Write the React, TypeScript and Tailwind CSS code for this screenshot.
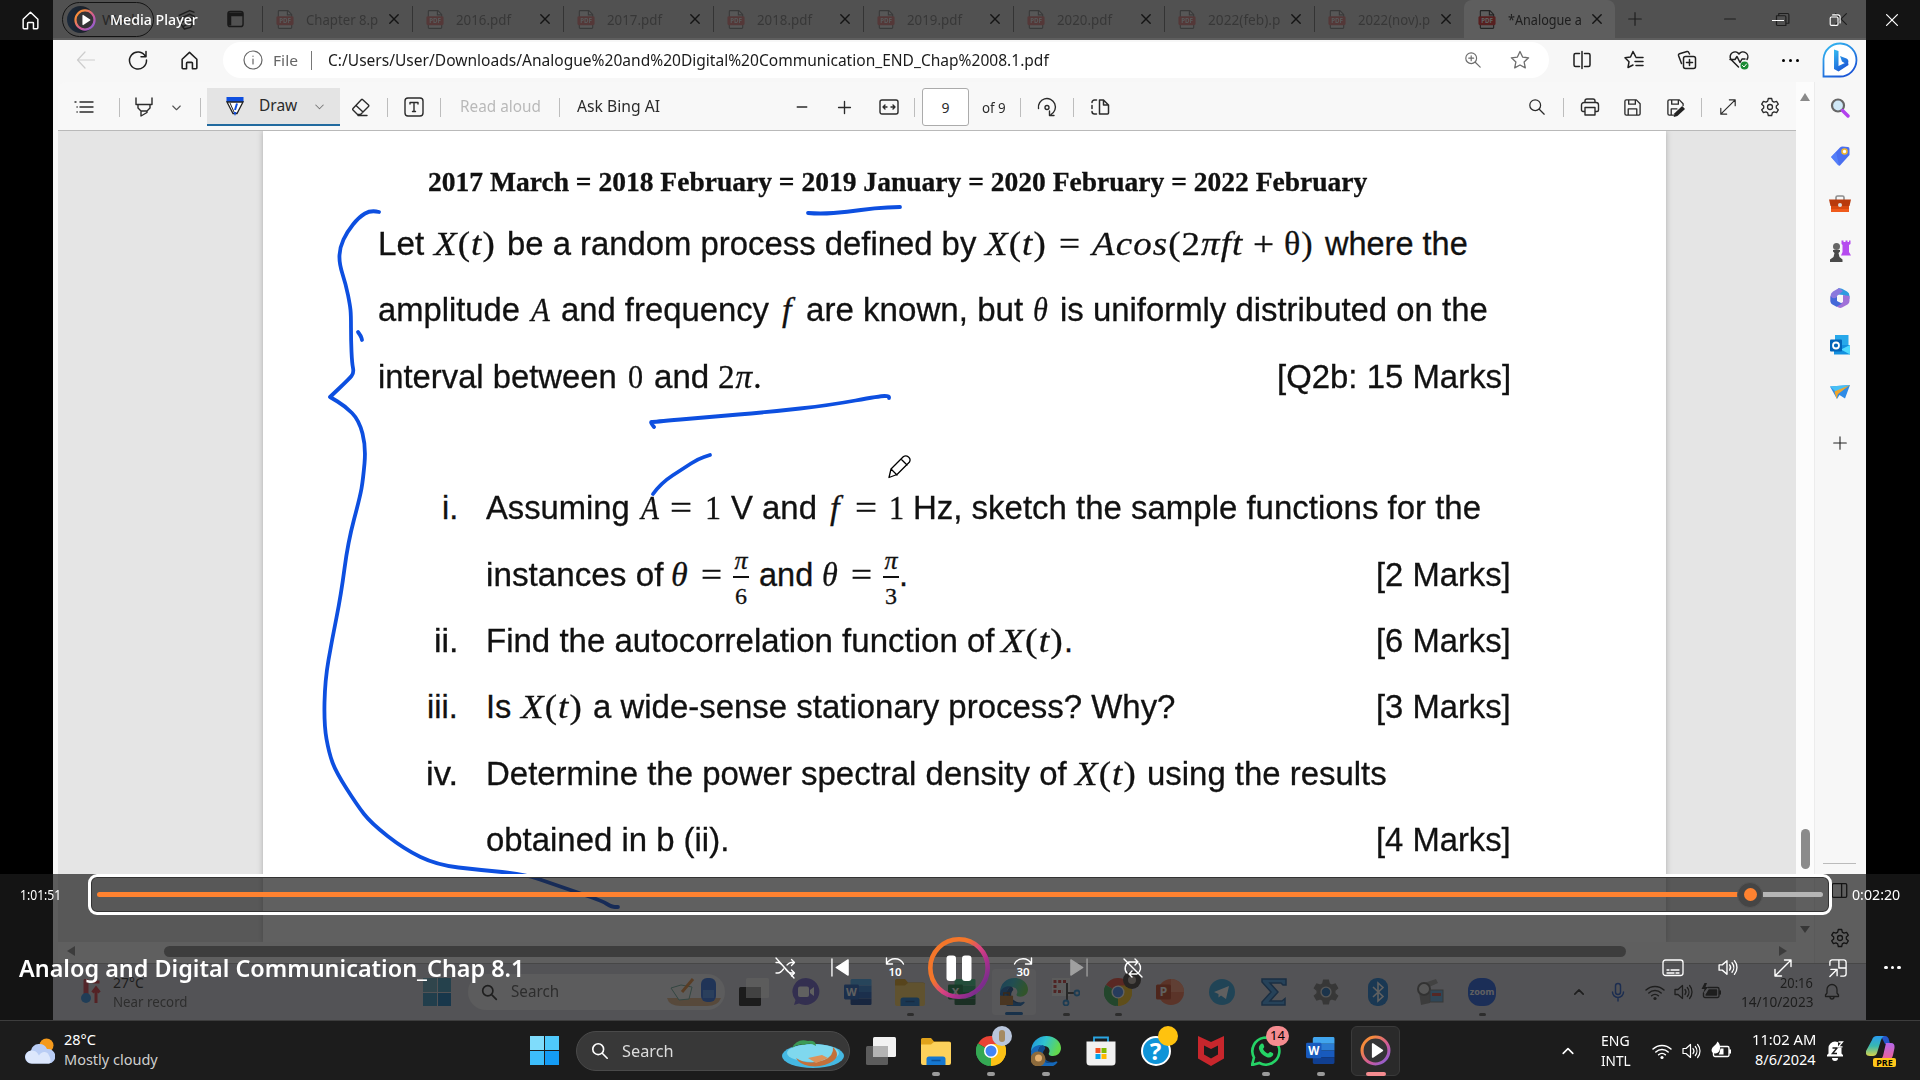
import React, { ReactNode, useLayoutEffect, useRef, useState } from "react";
import clsx from "clsx";

const UI = "font-['Noto_Sans','Open_Sans',sans-serif]";

/* Single-line label squeezed or stretched to a fixed width. */
function Fit({ w, c, children }: { w: number; c?: string; children: ReactNode }) {
  const ref = useRef<HTMLSpanElement>(null);
  const [k, setK] = useState(1);
  useLayoutEffect(() => {
    if (ref.current) setK(w / ref.current.offsetWidth);
  }, [w, children]);
  return (
    <span className={clsx("inline-block shrink-0 whitespace-nowrap", c)} style={{ width: w }}>
      <span ref={ref} className="inline-block origin-left whitespace-pre" style={{ transform: `scaleX(${k})` }}>
        {children}
      </span>
    </span>
  );
}

function Cell({ c, children }: { c: string; children?: ReactNode }) {
  return <div className={clsx("flex shrink-0 items-center justify-center", c)}>{children}</div>;
}

function Sep({ c = "h-[19px] bg-[#bdbdbd]" }: { c?: string }) {
  return <div className={clsx("w-px shrink-0", c)} />;
}

/* Outline icon on a 20-unit grid. */
function Ic({ d, c = "size-5", sw = 1.3, children }: { d?: string; c?: string; sw?: number; children?: ReactNode }) {
  return (
    <svg viewBox="0 0 20 20" className={clsx("shrink-0 overflow-visible", c)} fill="none" stroke="currentColor" strokeWidth={sw} strokeLinecap="round" strokeLinejoin="round">
      {d && <path d={d} />}
      {children}
    </svg>
  );
}

const P = {
  home: "M3 8.8 10 2.2l7 6.6V17a.8.8 0 0 1-.8.8h-3.4V12.600a.8.8 0 0 0-.8-.8H8a.8.8 0 0 0-.8.8v5.200H3.800A.8.8 0 0 1 3 17Z",
  x: "M4 4l12 12M16 4 4 16",
  plus: "M10 3v14M3 10h14",
  minus: "M4 10h12",
  down: "M5 8l5 5 5-5",
  up: "M4 13l6-6 6 6",
  search: "M8 14A6 6 0 1 0 8 2a6 6 0 0 0 0 12ZM12.500 12.500 18 18",
  expand: "M11.500 2H18v6.500M18 2 2 18M8.500 18H2v-6.500",
  gear: "M8.300 1.500h3.400l.6 2.600 1.700 1 2.600-.8 1.700 2.900-2 1.800v2l2 1.800-1.700 2.900-2.600-.8-1.700 1-.6 2.600H8.300l-.6-2.600-1.700-1-2.600.8-1.700-2.900 2-1.800V9L1.700 7.200l1.700-2.900 2.600.8 1.700-1ZM10 12.500a2.500 2.500 0 1 0 0-5 2.500 2.500 0 0 0 0 5Z",
  bell: "M3.500 14.500V13L5 11V7.500a5 5 0 0 1 10 0V11l1.500 2v1.500ZM8 15a2 2 0 0 0 4 0",
  sound: "M2 7.500h3L9.500 3.500v13L5 12.500H2ZM12 7.500a4 4 0 0 1 0 5M14.300 5.500a7 7 0 0 1 0 9M16.600 3.500a10 10 0 0 1 0 13",
};

function WifiIcon({ c = "size-5" }: { c?: string }) {
  return (
    <Ic c={c} sw={1.5} d="M1 8a13 13 0 0 1 18 0M3.800 11a9 9 0 0 1 12.400 0M6.600 13.800a5 5 0 0 1 6.800 0">
      <circle cx="10" cy="16.500" r="1.600" fill="currentColor" stroke="none" />
    </Ic>
  );
}

function BatteryIcon({ leaf }: { leaf?: boolean }) {
  return (
    <Ic c="size-5" sw={1.400}>
      <path d="M7 5.500h9.500a1.500 1.500 0 0 1 1.500 1.500v7a1.500 1.500 0 0 1-1.500 1.500H4A1.500 1.500 0 0 1 2.500 14v-3M19.300 9v3" />
      {leaf ? (
        <>
          <path d="M9.500 7.500h3v6h-4q-1.500 0 0-1.500Z" fill="currentColor" stroke="none" />
          <path d="M6.500.5C10 3 10.500 12 4.500 12.500 0 12.500-.5 8 2.500 5.500Q5.500 3.500 6.500.5Z" fill="currentColor" stroke="none" />
        </>
      ) : (
        <>
          <path d="M8 8h7.500v5H5Z" fill="currentColor" />
          <path d="M3.500 1 .5 7h3L2 11.500 7 5H4.500L6 1Z" fill="currentColor" stroke="none" />
        </>
      )}
    </Ic>
  );
}

function MediaBadge({ c }: { c: string }) {
  return (
    <svg viewBox="0 0 30 30" className={c}>
      <defs>
        <linearGradient id="mb" x1="0" y1="0" x2="1" y2="1">
          <stop offset=".2" stopColor="#f68a3c" />
          <stop offset=".6" stopColor="#d05a9a" />
          <stop offset="1" stopColor="#7d5fe0" />
        </linearGradient>
      </defs>
      <circle cx="15" cy="15" r="13" fill="#343436" stroke="url(#mb)" strokeWidth="3" />
      <path d="M11.500 8.800v12.400a.8.8 0 0 0 1.200.7l9.300-6.200a.8.8 0 0 0 0-1.400l-9.300-6.200a.8.8 0 0 0-1.200.7Z" fill="#fff" />
    </svg>
  );
}

function StartLogo({ c }: { c: string }) {
  return (
    <div className={clsx("grid shrink-0 grid-cols-2 grid-rows-2 gap-px", c)}>
      <div className="bg-[#7fdcfb]" />
      <div className="bg-[#4fc9fb]" />
      <div className="bg-[#3dbdfa]" />
      <div className="bg-[#149cf5]" />
    </div>
  );
}

function OfficeIcon({ c, letter, a, b, d, e, badge }: Record<"c" | "letter" | "a" | "b" | "d" | "e" | "badge", string>) {
  return (
    <svg viewBox="0 0 30 28" className={c}>
      <path d="M8 0h20a1.500 1.500 0 0 1 1.500 1.500V7H7V1.500Z" fill={a} />
      <path d="M7 7h22.500v7H7Z" fill={b} />
      <path d="M7 14h22.500v7H7Z" fill={d} />
      <path d="M7 21h22.500v5.500A1.500 1.500 0 0 1 28 28H8.500A1.500 1.500 0 0 1 7 26.500Z" fill={e} />
      <rect x="0" y="6" width="16" height="16" rx="1.500" fill={badge} />
      <text x="8" y="18.500" textAnchor="middle" fontSize="12" fontWeight="700" fill="#fff" fontFamily="Noto Sans">
        {letter}
      </text>
    </svg>
  );
}

function WordIcon({ c }: { c: string }) {
  return <OfficeIcon c={c} letter="W" a="#41a5ee" b="#2b7cd3" d="#185abd" e="#103f91" badge="#185abd" />;
}

function FolderIcon({ c }: { c: string }) {
  return (
    <svg viewBox="0 0 30 28" className={c}>
      <path d="M0 2.500A1.500 1.500 0 0 1 1.500 1H10l3 3.500H28A2 2 0 0 1 30 6.500V10H0Z" fill="#e0a21b" />
      <path d="M0 7.500h10l3-2.500h15.500A1.500 1.500 0 0 1 30 6.500V26a2 2 0 0 1-2 2H2a2 2 0 0 1-2-2Z" fill="#fdd15b" />
      <path d="M5.500 28v-6a2.500 2.500 0 0 1 2.500-2.500h14a2.500 2.500 0 0 1 2.500 2.500v6Z" fill="#1577d0" />
      <path d="M10.500 23.500h9" stroke="#0b4f96" strokeWidth="1.500" />
    </svg>
  );
}

function ChromeIcon({ c }: { c: string }) {
  return (
    <svg viewBox="0 0 30 30" className={c}>
      <path d="M15 15 2 7.500A15 15 0 0 1 28 7.500Z" fill="#ea4335" />
      <path d="M15 15 28 7.500A15 15 0 0 1 15 30Z" fill="#fbc116" />
      <path d="M15 15 15 30A15 15 0 0 1 2 7.500Z" fill="#34a853" />
      <path d="M15 8h13.300a15 15 0 0 1-5 19.500L15 30l6-11.500Z" fill="#fbc116" />
      <path d="M2 7.500 8.900 18.500 15 22l-2 7.900A15 15 0 0 1 2 7.500Z" fill="#34a853" />
      <circle cx="15" cy="15" r="7" fill="#fff" />
      <circle cx="15" cy="15" r="5.500" fill="#4285f4" />
    </svg>
  );
}

function EdgeIcon({ c, children }: { c: string; children?: ReactNode }) {
  return (
    <svg viewBox="0 0 30 30" className={c}>
      <defs>
        <linearGradient id="eg" x1="0" y1="0" x2="1" y2=".3">
          <stop offset="0" stopColor="#1d8fe0" />
          <stop offset=".5" stopColor="#2fc3d0" />
          <stop offset="1" stopColor="#62d84e" />
        </linearGradient>
      </defs>
      <path d="M0 16C0 6 7 0 15.500 0 24 0 30 6 30 12c0 5-4 8-8 8-3.500 0-5-1.500-4-3 1.500-2.500 0-7-5-7C6 10 1 13 0 16Z" fill="url(#eg)" />
      <path d="M0 16C1 11 6 8.500 11 9c-4 3-4 7-3 10 2 6 9 10 17 6.500 1-.4 2 .2 1 1.500A15 15 0 0 1 0 16Z" fill="#1668b8" />
      <path d="M11 9c-4 3-5 8-3 12 2.500 5 9 7.500 16 5-7 1-12-3-12-8 0-2 .5-3.500 2-5 .8-.8-.5-4-3-4Z" fill="#0f4c8e" />
      {children}
    </svg>
  );
}

function TaskViewIcon({ dark }: { dark?: boolean }) {
  return (
    <svg viewBox="0 0 30 28" className="h-7 w-[30px]">
      <rect x="0" y="9" width="22" height="19" rx="1.500" fill={dark ? "#1c1c1c" : "#5c5c5c"} />
      <rect x="7" y="0" width="23" height="20" rx="1.500" fill={dark ? "#fafafa" : "#f2f2f2"} fillOpacity={dark ? 0.75 : 1} />
      <path d="M7 9h15v11H7Z" fill={dark ? "#9b9b9b" : "#b4b4b4"} />
    </svg>
  );
}

function PdfIcon() {
  return (
    <svg viewBox="0 0 18 20" className="h-[19px] w-[18px] shrink-0">
      <path d="M2 8V1.500A.8.8 0 0 1 2.800.7H12l4 4V8M2 15v3.500a.8.8 0 0 0 .8.8h12.400a.8.8 0 0 0 .8-.8V15" fill="#f5f5f5" stroke="#333" strokeWidth="1.200" />
      <path d="M11.500.7v4.500H16" fill="none" stroke="#333" strokeWidth="1.200" />
      <rect x="0" y="6.500" width="18" height="9.500" rx="1.500" fill="#e02a2a" />
      <text x="9" y="13.800" textAnchor="middle" fontSize="6.500" fontWeight="700" fill="#fff" fontFamily="Noto Sans">
        PDF
      </text>
    </svg>
  );
}

/* ---------- Recorded browser ---------- */

const tabs: [string, number][] = [
  ["Chapter 8.p", 72],
  ["2016.pdf", 55],
  ["2017.pdf", 55],
  ["2018.pdf", 55],
  ["2019.pdf", 55],
  ["2020.pdf", 55],
  ["2022(feb).p", 72],
  ["2022(nov).p", 72],
];

function Tab({ title, w, active }: { title: string; w: number; active?: boolean }) {
  return (
    <div className={clsx("flex h-full w-[150.300px] shrink-0 items-center", active && "rounded-t-lg bg-[#f7f7f7]")}>
      <Sep c={active ? "h-6" : "h-[26px] bg-[#6b6b6b]"} />
      <div className={clsx("ml-[13px] flex items-center", !active && "opacity-50")}>
        <PdfIcon />
        <Fit w={w} c="ml-3 text-[15px] text-[#222]">{title}</Fit>
      </div>
      <Ic d={P.x} c="ml-auto mr-[11px] size-[14px] text-black" sw={2} />
    </div>
  );
}

function TabStrip() {
  return (
    <div className="flex h-[38px] items-center bg-[#cbcbcb] text-[#222]">
      <div className="ml-[9px] flex h-[35px] w-[92px] shrink-0 items-center rounded-full border-[1.500px] border-black pl-1">
        <div className="size-[27px] rounded-full bg-[linear-gradient(90deg,#1b4a86,#16202e)]" />
        <span className="ml-2 text-[15px] text-[#444]">Work</span>
      </div>
      <Cell c="ml-[22px] w-5">
        <Ic c="size-[21px]" d="M3 6 13 1.500 17 3M2.500 10 13 5l4.500 2M4 13.500 14 8.500l4 2-4 7-6 1.500ZM6 17 15 12.500" sw={1.400} />
      </Cell>
      <Cell c="ml-[31px] w-[17px]">
        <svg viewBox="0 0 18 18" className="size-[18px]">
          <rect x="1" y="1" width="16" height="16" rx="2.500" fill="none" stroke="#111" strokeWidth="1.500" />
          <path d="M1 2h16v4H1ZM1 2h3.500v14H1Z" fill="#111" />
        </svg>
      </Cell>
      <div className="ml-[18px] flex h-full">
        {tabs.map(([t, w]) => (
          <Tab key={t} title={t} w={w} />
        ))}
        <Tab title="*Analogue a" w={74} active />
      </div>
      <Cell c="w-[40px]"><Ic d={P.plus} c="size-[18px]" /></Cell>
      <Cell c="ml-[60px] w-[30px]"><Ic d={P.minus} c="size-[18px]" /></Cell>
      <Cell c="ml-[22px] w-[32px]">
        <Ic c="size-[15px]" sw={1.600} d="M2 5h11a1.500 1.500 0 0 1 1.500 1.500V18h-11A1.500 1.500 0 0 1 2 16.500ZM5 5V2h12a1.500 1.500 0 0 1 1.500 1.500V15h-4" />
      </Cell>
      <Cell c="ml-[25px] w-[34px]"><Ic d={P.x} c="size-[18px]" /></Cell>
    </div>
  );
}

function AddressBar() {
  return (
    <div className="flex h-11 items-center text-[#1f1f1f]">
      <Cell c="w-[66px]"><Ic c="size-5 text-[#cdcdcd]" d="M18.500 10H1.500M9 2 1.500 10 9 18" sw={1.200} /></Cell>
      <Cell c="w-[38px]"><Ic c="size-5" d="M17.500 6.500A8.500 8.500 0 1 0 18.500 10M18 1.500v5.300h-5" sw={1.500} /></Cell>
      <Cell c="w-[66px] pr-px"><Ic c="size-[21px]" d={P.home} sw={1.500} /></Cell>
      <div className="flex h-9 w-[1326px] items-center rounded-[18px] bg-white pl-5 pr-[19px]">
        <Ic c="size-5 text-[#666]" sw={1.200} d="M10 9v5M10 6v.3"><circle cx="10" cy="10" r="9" /></Ic>
        <Fit w={25} c="ml-[10px] text-[15px] text-[#666]">File</Fit>
        <Sep c="ml-[13px] h-[19px] bg-[#777]" />
        <Fit w={721} c="ml-[16px] text-[16px] text-[#1b1b1b]">C:/Users/User/Downloads/Analogue%20and%20Digital%20Communication_END_Chap%2008.1.pdf</Fit>
        <Ic c="ml-auto size-[18px] text-[#6d6d6d]" d={P.search + "M5.300 8h5.400M8 5.300v5.400"} />
        <Ic c="ml-7 size-5 text-[#6d6d6d]" d="M10 1.500l2.600 5.600 6 .7-4.500 4.100 1.200 6L10 15l-5.300 2.900 1.200-6L1.400 7.800l6-.7Z" />
      </div>
      <Cell c="w-[66px]"><Ic c="size-5" d="M7.500 3.500h-4A1.500 1.500 0 0 0 2 5v10a1.500 1.500 0 0 0 1.500 1.500h4M12.500 3.500h4A1.500 1.500 0 0 1 18 5v10a1.500 1.500 0 0 1-1.500 1.500h-4M10 1.500v17" sw={1.500} /></Cell>
      <Cell c="w-[38px]"><Ic c="size-5" d="M11.500 6.300 9 1.500 6.500 7 1 7.800l4 4L4 17.500l5-2.500M12 7.500h7M11 11.500h8M12 15.500h7" sw={1.500} /></Cell>
      <Cell c="w-[68px]"><Ic c="size-[20px]" d="M4.500 13.500 1.500 5.500a1.500 1.500 0 0 1 1-1.800L10 1.500a1.500 1.500 0 0 1 1.800 1L12.500 4M8.500 6.500h8A2 2 0 0 1 18.500 8.500v8a2 2 0 0 1-2 2h-8a2 2 0 0 1-2-2V8.500a2 2 0 0 1 2-2ZM12.500 9.500v6M9.500 12.500h6" sw={1.500} /></Cell>
      <Cell c="w-9">
        <Ic c="size-5" d="M9.500 17 2 9.500A4.800 4.800 0 0 1 10 4a4.800 4.800 0 0 1 8 5.500M1 9.500h5l2-3 3 6 2-3.500h3" sw={1.500}>
          <circle cx="15.500" cy="15.500" r="4" fill="#1a8a34" stroke="none" />
          <path d="M13.500 15.500 15 17l2.500-3" stroke="#fff" strokeWidth="1" />
        </Ic>
      </Cell>
      <Cell c="w-[66px] gap-1"><i className="size-[3px] rounded-full bg-black" /><i className="size-[3px] rounded-full bg-black" /><i className="size-[3px] rounded-full bg-black" /></Cell>
      <Cell c="w-[33px]">
        <svg viewBox="0 0 36 36" className="size-9 shrink-0">
          <defs>
            <linearGradient id="bg1" x1="0" y1="0" x2=".6" y2="1">
              <stop offset="0" stopColor="#35bdf2" />
              <stop offset="1" stopColor="#1b57d6" />
            </linearGradient>
          </defs>
          <path d="M1.500 34.500V17A16.500 16.500 0 1 1 18 34.500Z" fill="#fff" stroke="url(#bg1)" strokeWidth="1.800" />
          <path d="M12 7.500 16.500 9v15L26 19.500 26.500 23 16.500 29.500 12 27ZM18 14l6.500 2.500c2.500 1.200 2.500 4 .5 6l-5-3Z" fill="url(#bg1)" />
        </svg>
      </Cell>
    </div>
  );
}

function PdfToolbar() {
  return (
    <div className="flex h-[49px] items-center rounded-tl-lg border-b border-[#b9b9b9] bg-[#f8f8f8] pt-[2px] text-[#2b2b2b]">
      <Cell c="w-[52px]"><Ic c="size-5" d="M6 5h13M6 10h13M6 15h13M1 5h1M3 10h.2M3 15h.2" sw={1.400} /></Cell>
      <Cell c="w-[19px]"><Sep /></Cell>
      <Cell c="w-[30px]">
        <Ic c="size-5" d="M2 1v6.500h16V1M4 7.500v3.500L7 14h6l3-3V7.500M7 14v5l6-3.500V14" sw={1.400} />
      </Cell>
      <Cell c="w-[34px]"><Ic c="size-[15px] text-[#555]" d={P.down} sw={1.500} /></Cell>
      <Cell c="w-[14px]"><Sep /></Cell>
      <div className="flex h-[38px] w-[133px] shrink-0 items-center border-b-2 border-[#216a9f] bg-[#e4e4e4]">
        <svg viewBox="0 0 20 20" className="ml-[18px] size-5">
          <path d="M1.500 1h17v5h-17Z" fill="#0f4fe0" />
          <path d="M2 6 8 17.500h4L18 6Z" fill="#fff" stroke="#222" strokeWidth="1.300" />
          <path d="M5 7l4 9" stroke="#222" />
          <path d="M12 7.500 10 14" stroke="#0f4fe0" strokeWidth="2" />
          <path d="M8.500 16h3L10 20Z" fill="#0f4fe0" />
        </svg>
        <Fit w={38} c="ml-[14px] text-[15.500px]">Draw</Fit>
        <Ic c="ml-[15px] size-[15px] text-[#777]" d={P.down} sw={1.400} />
      </div>
      <Cell c="w-[42px]"><Ic c="size-5" d="M11.500 2.500 17.500 8a1 1 0 0 1 0 1.500L9.500 17.500H6.500L2 13a1 1 0 0 1 0-1.500L10.500 2.500a.8.8 0 0 1 1 0ZM5 8.500 12 15M7 18.500h9" sw={1.400} /></Cell>
      <Cell c="w-[10px]"><Sep /></Cell>
      <Cell c="w-11"><Ic c="size-5" d="M6 7V5.500h8V7M10 5.500v9M8.500 14.500h3" sw={1.400}><rect x="1" y="1" width="18" height="18" rx="3" /></Ic></Cell>
      <Cell c="w-2"><Sep /></Cell>
      <Fit w={81} c="ml-4 text-[15.500px] text-[#b9b9b9]">Read aloud</Fit>
      <Cell c="w-9"><Sep /></Cell>
      <Fit w={83} c="text-[15.500px]">Ask Bing AI</Fit>
      <Cell c="ml-[122px] w-10"><Ic c="size-[16px]" d={P.minus} sw={1.600} /></Cell>
      <Cell c="w-[45px]"><Ic c="size-[17px]" d={P.plus} sw={1.600} /></Cell>
      <Cell c="w-11"><Ic c="size-5" d="M8 10H4M6 8l-2 2 2 2M12 10h4M14 8l2 2-2 2" sw={1.400}><rect x="1" y="3" width="18" height="14" rx="2" /></Ic></Cell>
      <Cell c="w-[7px]"><Sep /></Cell>
      <Cell c="ml-1 h-[38px] w-[47px] rounded-[3px] border border-[#ababab] bg-white text-[14px]">9</Cell>
      <Fit w={24} c="ml-[13px] text-[15px]">of 9</Fit>
      <Cell c="w-[29px]"><Sep /></Cell>
      <Cell c="w-6"><Ic c="size-5" d="M1.500 11.500A8.500 8.500 0 1 1 14 17.500M17 18.500h-4.500V14" sw={1.400}><circle cx="10" cy="10.500" r="2" /></Ic></Cell>
      <Cell c="w-[29px]"><Sep /></Cell>
      <Cell c="w-6"><Ic c="size-5" d="M6.500 3H4.500A2.500 2.500 0 0 0 2 5.500M2 8.500v3M2 14.500A2.500 2.500 0 0 0 4.500 17h2M9.500 3v14h8a1 1 0 0 0 1-1V8l-5-5ZM13.500 3v5h5" sw={1.500} /></Cell>
      <Cell c="ml-auto w-[26px]"><Ic c="size-[18px]" d={P.search} sw={1.400} /></Cell>
      <Cell c="w-[26px]"><Sep /></Cell>
      <Cell c="w-7"><Ic c="size-5" d="M5 5.500V4a2 2 0 0 1 2-2h6a2 2 0 0 1 2 2v1.500M5 14.500H3a1.500 1.500 0 0 1-1.500-1.500V8A2.500 2.500 0 0 1 4 5.500h12A2.500 2.500 0 0 1 18.500 8v5a1.500 1.500 0 0 1-1.500 1.500h-2M5 10.500h10V18H5Z" sw={1.400} /></Cell>
      <Cell c="w-14"><Ic c="size-[19px]" d="M3.500 2h10.500L18 6v10.500A1.500 1.500 0 0 1 16.500 18h-13A1.500 1.500 0 0 1 2 16.500v-13A1.500 1.500 0 0 1 3.500 2ZM6 2v4.500h7V2M5.500 18v-6.500h9V18" sw={1.400} /></Cell>
      <Cell c="w-[30px]">
        <Ic c="size-[19px]" d="M8 18H3.500A1.500 1.500 0 0 1 2 16.500v-13A1.500 1.500 0 0 1 3.500 2h10.500L18 6v2M6 2v4.500h7V2M5.500 18v-6.500h6" sw={1.400}>
          <path d="M8 20l1-4 8-7.500 3 3L12 19Z" fill="#222" stroke="none" />
        </Ic>
      </Cell>
      <Cell c="w-[22px]"><Sep /></Cell>
      <Cell c="w-8"><Ic c="size-[18px]" d={P.expand} /></Cell>
      <Cell c="w-[52px]"><Ic c="size-5" d={P.gear} sw={1.300} /></Cell>
    </div>
  );
}

/* ---------- Document ---------- */

/* A run of text: left edge, right edge, characters and whether it is math. */
type Run = [number, number, ReactNode, boolean?];

const FRAC = "frac:";

function Line({ runs }: { runs: Run[] }) {
  let end = 263;
  return (
    <div className="flex h-[66.300px] items-baseline leading-[66px]">
      {runs.map(([a, b, t, math], i) => {
        const gap = a - end;
        end = b;
        const frac = typeof t === "string" && t.startsWith(FRAC);
        return (
          <div key={i} className="shrink-0" style={{ marginLeft: gap, width: b - a }}>
            {frac ? (
              <span className="relative inline-block w-full font-['Liberation_Serif',serif] text-[24px]">
                <span className="invisible">0</span>
                <span className="absolute inset-x-0 top-[13px] flex flex-col items-center leading-[18px]">
                  <i className="h-[18px] translate-y-[-6px] text-[26px]">π</i>
                  <span className="h-[2px] w-full bg-[#111]" />
                  <span className="mt-[9px]">{(t as string).slice(FRAC.length)}</span>
                </span>
              </span>
            ) : (
              <Fit w={b - a} c={math ? "font-['Liberation_Serif',serif] text-[34px] tracking-[1px]" : "font-['Liberation_Sans',sans-serif] text-[32.500px]"}>
                {t}
              </Fit>
            )}
          </div>
        );
      })}
    </div>
  );
}

const Xt = <><i>X</i>(<i>t</i>)</>;

const intro: Run[][] = [
  [
    [378, 424, "Let"], [434, 496, Xt, true], [507, 976, "be a random process defined by"], [985, 1047, Xt, true], [1059, 1081, "=", true],
    [1092, 1243, <><i>Acos</i>(2<i>πft</i></>, true], [1253, 1275, "+", true], [1284, 1314, "θ)", true], [1325, 1468, "where the"],
  ],
  [
    [378, 520, "amplitude"], [531, 551, <i>A</i>, true], [561, 769, "and frequency"], [782, 792, <i>f</i>, true], [806, 1023, "are known, but"],
    [1033, 1049, <i>θ</i>, true], [1060, 1488, "is uniformly distributed on the"],
  ],
  [[378, 617, "interval between"], [628, 644, "0", true], [654, 709, "and"], [718, 763, <>2<i>π</i>.</>, true], [1277, 1511, "[Q2b: 15 Marks]"]],
];

const questions: Run[][] = [
  [
    [442, 458, "i."], [486, 630, "Assuming"], [641, 660, <i>A</i>, true], [670, 693, "=", true], [705, 722, "1", true], [731, 817, "V and"], [830, 840, <i>f</i>, true],
    [855, 878, "=", true], [889, 905, "1", true], [913, 1481, "Hz, sketch the sample functions for the"],
  ],
  [
    [486, 663, "instances of"], [671, 689, <i>θ</i>, true], [701, 723, "=", true], [733, 749, FRAC + "6"], [759, 813, "and"], [822, 839, <i>θ</i>, true],
    [851, 873, "=", true], [883, 899, FRAC + "3"], [899, 908, "."], [1376, 1511, "[2 Marks]"],
  ],
  [[434, 458, "ii."], [486, 994, "Find the autocorrelation function of"], [1001, 1064, Xt, true], [1064, 1073, "."], [1376, 1511, "[6 Marks]"]],
  [[427, 458, "iii."], [486, 511, "Is"], [521, 583, Xt, true], [593, 1175, "a wide-sense stationary process? Why?"], [1376, 1511, "[3 Marks]"]],
  [[426, 458, "iv."], [486, 1067, "Determine the power spectral density of"], [1075, 1137, Xt, true], [1147, 1387, "using the results"]],
  [[486, 729, "obtained in b (ii)."], [1376, 1511, "[4 Marks]"]],
];

/* Pen strokes, in page-canvas units. */
const strokes: number[][][] = [
  [[379, 212], [371, 210], [359, 217], [347, 232], [340, 247], [339, 263], [346, 285], [350, 305], [351, 315], [351, 340], [352, 363], [354, 373], [349, 379], [330, 397], [330, 397], [345, 406], [359, 420], [366, 447], [363, 480], [360, 497], [348, 542], [341, 595], [332, 640], [325, 680], [324, 725], [329, 753], [336, 772], [357, 805], [371, 823], [404, 849], [437, 865], [480, 870], [524, 874], [553, 884], [582, 894], [602, 901], [612, 907], [618, 907]],
  [[358, 332], [361, 336], [362, 340]],
  [[808, 213], [820, 214], [847, 212], [875, 208], [900, 207]],
  [[654, 427], [650, 422], [653, 422], [708, 417], [769, 412], [831, 405], [880, 396], [889, 396], [889, 398]],
  [[653, 494], [661, 483], [684, 468], [698, 459], [710, 455]],
];

function smooth(p: number[][]) {
  let d = `M${p[0][0]} ${p[0][1]}`;
  for (let i = 1; i < p.length - 1; i++) {
    d += `Q${p[i][0]} ${p[i][1]} ${(p[i][0] + p[i + 1][0]) / 2} ${(p[i][1] + p[i + 1][1]) / 2}`;
  }
  const l = p[p.length - 1];
  return `${d}L${l[0]} ${l[1]}`;
}

function PdfPage() {
  return (
    <div className="relative ml-[205px] h-full w-[1403px] overflow-hidden bg-white text-[#111] shadow-[0_0_6px_#00000040] [-webkit-text-stroke:0.300px_#111]">
      <div className="mt-[31px] flex h-10 items-center pl-[165px]">
        <Fit w={939} c="font-['Liberation_Serif',serif] text-[28px] font-bold">2017 March = 2018 February = 2019 January = 2020 February = 2022 February</Fit>
      </div>
      <div className="mt-[9px]">{intro.map((r, i) => <Line key={i} runs={r} />)}</div>
      <div className="mt-[65.500px]">{questions.map((r, i) => <Line key={i} runs={r} />)}</div>
      <svg viewBox="263 131 1403 811" className="absolute inset-0 h-[811px] w-[1403px]" fill="none" strokeLinecap="round" strokeLinejoin="round">
        {strokes.map((s, i) => (
          <path key={i} d={smooth(s)} stroke="#0d4fe0" strokeWidth="3.800" />
        ))}
        <path d="M889 477.500 891 469 903.500 456.500Q906 455 908.500 457T909.500 462L897 474.500ZM901 459l6 6M891 469l6 6" fill="#fff" stroke="#000" strokeWidth="1.300" />
      </svg>
    </div>
  );
}

function Sidebar() {
  return (
    <div className="flex w-[52px] shrink-0 flex-col items-center border-l border-[#ececec] bg-[#f7f7f7] pr-[2px]">
      <Cell c="h-[52px] w-6">
        <svg viewBox="0 0 20 20" className="size-5">
          <circle cx="8" cy="7.500" r="6" fill="#cfe8f7" stroke="#666" strokeWidth="2.200" />
          <path d="M12.500 12.500 18 18" stroke="#b341ee" strokeWidth="3.400" strokeLinecap="round" />
        </svg>
      </Cell>
      <Cell c="h-11 w-6">
        <svg viewBox="0 0 20 20" className="size-5">
          <path d="M1 11 10 1.500Q11 .5 12.500.5L18 1Q19.500 1 19.500 3V9L10 19.500Q9 20 8 19Z" fill="#4a6ff0" />
          <path d="M8 19 1 11l5-5 3 13Z" fill="#5b8bff" opacity=".6" />
          <circle cx="14.500" cy="5.500" r="2.500" fill="#fff" stroke="#f2b62c" strokeWidth="1.600" />
        </svg>
      </Cell>
      <Cell c="h-[52px] w-6">
        <svg viewBox="0 0 22 20" className="h-5 w-[22px]">
          <path d="M7 6V3.500Q7 2 8.500 2h5Q15 2 15 3.500V6" fill="none" stroke="#8d8d8d" strokeWidth="1.600" />
          <path d="M2 10h18v8H2Z" fill="#d9480f" />
          <path d="M0 5.500h22L20.500 12h-19Z" fill="#b93a0c" />
          <path d="M2 15h18v3H2Z" fill="#ef5a1b" />
          <circle cx="11" cy="11" r="2" fill="#ddd" />
        </svg>
      </Cell>
      <Cell c="h-[42px] w-6">
        <svg viewBox="0 0 22 22" className="size-[22px]">
          <path d="M12.500.5h2V2h2V.5h2V2h1.500V.5h1.500V4l-1.500 1v7l2 3.500H12l1.500-3.500V5L12.500 4Z" fill="#b64bef" />
          <circle cx="7.500" cy="6.500" r="3.500" fill="#666" />
          <path d="M4 10h7v1.500L9.500 13l1 4 3 2.500V22H1v-2.500L4.500 17l1-4L4 11.500Z" fill="#4a4a4a" />
        </svg>
      </Cell>
      <Cell c="h-[52px] w-6">
        <svg viewBox="0 0 20 20" className="size-5">
          <path d="M8 .6Q10-.4 12 .8L17 3.600Q19.500 5 19.500 8V11L13.500 7 8 6.500Z" fill="#2e9be0" />
          <path d="M9 0 3 3.500Q.5 5 .5 8v5q0 3 3 3.500L7 14V8l6-5Z" fill="#8a78dd" />
          <path d="M19.500 8v5q0 2-2 3.500L12 19.600Q10 20.400 8 19.300L6 18l7-4V7Z" fill="#a171d8" />
          <path d="M.5 8v5q0 2.500 2 3.500l4 2.300L12 15.500 7 13V9Q3 12 .5 8Z" fill="#4468d8" />
          <circle cx="10" cy="10" r="3" fill="#f7f7f7" />
        </svg>
      </Cell>
      <Cell c="h-[42px] w-6">
        <svg viewBox="0 0 20 20" className="size-5">
          <path d="M5 0h13.500v10H5Z" fill="#28a8ea" />
          <path d="M4 10h16v9.500H4Z" fill="#1490df" />
          <path d="M20 10v9.500L11 14.500Z" fill="#50d9ff" />
          <rect x="0" y="4.500" width="12" height="12" rx="1" fill="#0364b8" />
          <circle cx="6" cy="10.500" r="3" fill="none" stroke="#fff" strokeWidth="1.800" />
        </svg>
      </Cell>
      <Cell c="h-[52px] w-6">
        <svg viewBox="0 0 20 20" className="size-5">
          <path d="M0 4.500 20 3 15 16.500 9.500 13 7 17Z" fill="#2f8be6" />
          <path d="M0 4.500 20 3 6 10Z" fill="#47c0f5" />
          <path d="M20 3 8 12l-1.500 5L4.500 9.500Z" fill="#f0a52c" />
        </svg>
      </Cell>
      <Cell c="h-[50px] w-6"><Ic c="size-[18px] text-[#222]" d={P.plus} sw={1.200} /></Cell>
      <div className="mt-auto h-px w-[33px] bg-[#bbb]" />
      <Cell c="mt-3 h-7 w-6"><Ic c="size-[17px]" d="M3 2h14a1.500 1.500 0 0 1 1.500 1.500v13A1.500 1.500 0 0 1 17 18H3a1.500 1.500 0 0 1-1.500-1.500v-13A1.500 1.500 0 0 1 3 2ZM12.500 2v16" sw={1.500} /></Cell>
      <Cell c="mb-[13px] mt-[22px] h-6 w-6"><Ic c="size-5" d={P.gear} /></Cell>
    </div>
  );
}

function Browser() {
  return (
    <>
      <TabStrip />
      <AddressBar />
      <div className="flex h-[881px] pl-[5px]">
        <div className="flex w-[1738px] shrink-0 flex-col">
          <PdfToolbar />
          <div className="h-[811px] overflow-hidden bg-[#e5e5e5]"><PdfPage /></div>
          <div className="flex h-[21px] items-center bg-[#fafafa] pb-[3px]">
            <i className="ml-[9px] border-y-[5px] border-r-[8px] border-y-transparent border-r-[#888]" />
            <div className="ml-[89px] h-[11px] w-[1462px] rounded-full bg-[#8b8b8b]" />
            <i className="ml-auto mr-[9px] border-y-[5px] border-l-[8px] border-y-transparent border-l-[#888]" />
          </div>
        </div>
        <div className="flex w-[18px] shrink-0 flex-col items-center bg-[#fcfcfc] pt-[11px]">
          <i className="border-x-[5px] border-b-[8px] border-x-transparent border-b-[#8a8a8a]" />
          <div className="mt-[728px] h-[40px] w-[9px] rounded-full bg-[#8b8b8b]" />
          <i className="mt-[57px] border-x-[5px] border-t-[7px] border-x-transparent border-t-[#777]" />
        </div>
        <Sidebar />
      </div>
    </>
  );
}

/* ---------- Recorded taskbar ---------- */

function AppSlot({ dot, c, children }: { dot?: string; c: string; children: ReactNode }) {
  return (
    <div className={clsx("relative flex shrink-0 items-center justify-center", c)}>
      {children}
      {dot && <i className={clsx("absolute rounded-full", dot)} />}
    </div>
  );
}

function InnerTaskbar() {
  const slot = "h-[46px] w-[52px]";
  const dot = "-bottom-[1px] h-[3px] w-[7px] bg-[#555]";
  return (
    <div className="flex h-[57px] items-center border-t border-[#aaa] bg-[#d4d4dc] text-[#222]">
      <svg viewBox="0 0 20 26" className="ml-[26px] h-[26px] w-[22px]">
        <path d="M6 2v16" stroke="#d33a4a" strokeWidth="5" strokeLinecap="round" />
        <circle cx="6" cy="19" r="5" fill="#2a8be0" />
        <path d="M16 24V11M12.500 13.500 16 9l3.500 4.500M12.500 3h7" stroke="#d6303a" strokeWidth="3" fill="none" />
      </svg>
      <div className="ml-3 flex w-[310px] flex-col text-[14px] leading-[19px]">
        <Fit w={31}>27°C</Fit>
        <Fit w={75} c="text-[#555]">Near record</Fit>
      </div>
      <StartLogo c="size-7 brightness-75" />
      <div className="ml-[17px] flex h-9 w-[257px] shrink-0 items-center rounded-full bg-[#f0f0f3] pl-[13px]">
        <Ic c="size-[17px]" d={P.search} sw={2} />
        <Fit w={48} c="ml-[13px] text-[15.500px] text-[#555]">Search</Fit>
        <svg viewBox="0 0 54 32" className="ml-auto mr-1 h-8 w-[54px]">
          <path d="M0 22h54q-3 8-14 8H14Q2 30 0 22Z" fill="#e0b183" />
          <path d="M4 12 14 9l11 2-3 12-10 1Z" fill="#f6f6f0" stroke="#6aa89a" />
          <path d="M15 16 26 3" stroke="#e48a3a" strokeWidth="3" />
          <rect x="34" y="2" width="15" height="24" rx="6" fill="#2a6de0" />
          <path d="M36 14h11v8H36Z" fill="#4b91f2" />
        </svg>
      </div>
      <div className="ml-[3px] flex">
        <AppSlot c={slot}><TaskViewIcon dark /></AppSlot>
        <AppSlot c={slot}>
          <svg viewBox="0 0 28 28" className="size-7">
            <path d="M14 0a14 13.500 0 1 1-7 25.500L2 27l1.500-5A13.500 13.500 0 0 1 14 0Z" fill="#6a5cc8" />
            <rect x="6" y="8.500" width="11" height="10.500" rx="2" fill="#fff" />
            <path d="M18 12l4-3v9l-4-3Z" fill="#fff" />
          </svg>
        </AppSlot>
        <AppSlot c={slot}><WordIcon c="h-7 w-7" /></AppSlot>
        <AppSlot c={slot} dot={dot}><FolderIcon c="h-7 w-[30px]" /></AppSlot>
        <AppSlot c={slot}><OfficeIcon c="h-7 w-7" letter="X" a="#33c481" b="#21a366" d="#107c41" e="#185c37" badge="#107c41" /></AppSlot>
        <AppSlot c={clsx(slot, "before:absolute before:inset-x-1 before:inset-y-0 before:rounded before:bg-white/40")} dot="bottom-0 h-[3px] w-[18px] bg-[#0f63b5]">
          <EdgeIcon c="relative size-7"><path d="M0 19h14v10H0Z" fill="#b5722c" /><path d="M4 19v-3h6v3" fill="none" stroke="#7a4613" strokeWidth="1.500" /></EdgeIcon>
        </AppSlot>
        <AppSlot c={slot} dot={dot}>
          <svg viewBox="0 0 28 28" className="size-7">
            <path d="M0 0h18v18H0Z" fill="#eee" />
            <path d="M14 3.500H3v10h8" fill="none" stroke="#c53434" strokeWidth="3" strokeDasharray="3 1.800" />
            <path d="M15 22V5M15 15h7" stroke="#444" strokeWidth="2" fill="none" />
            <circle cx="14" cy="25" r="2.500" fill="none" stroke="#1b86d4" strokeWidth="1.800" />
            <circle cx="25" cy="15" r="2.500" fill="none" stroke="#1b86d4" strokeWidth="1.800" />
          </svg>
        </AppSlot>
        <AppSlot c={slot} dot={dot}>
          <ChromeIcon c="size-7" />
          <i className="absolute right-[3px] top-[2px] flex size-[18px] items-center justify-center rounded-full bg-[#3d3834]"><i className="size-2 rounded-full bg-[#b8aca2]" /></i>
        </AppSlot>
        <AppSlot c={slot}>
          <svg viewBox="0 0 28 28" className="size-7">
            <circle cx="15" cy="14" r="13" fill="#ed6c47" />
            <path d="M15 1a13 13 0 0 1 13 13H15Z" fill="#ff8f6b" />
            <rect x="0" y="6.500" width="15" height="15" rx="1.500" fill="#c43e1c" />
            <text x="7.500" y="18" textAnchor="middle" fontSize="12" fontWeight="700" fill="#fff" fontFamily="Noto Sans">P</text>
          </svg>
        </AppSlot>
        <AppSlot c={slot}>
          <svg viewBox="0 0 26 26" className="size-[26px]">
            <circle cx="13" cy="13" r="13" fill="#2aa1dc" />
            <path d="M5 13 20 7l-3 13-5-3.500-2.500 2V15Z" fill="#fff" />
          </svg>
        </AppSlot>
        <AppSlot c={slot}>
          <svg viewBox="0 0 28 28" className="size-7">
            <path d="M2 1h24v6h-3L21 5H10l8 9-8 9h12l3-2.500V27H2v-3l9-10L2 4Z" fill="#3f9ae6" stroke="#15589c" strokeWidth="1.500" />
          </svg>
        </AppSlot>
        <AppSlot c={slot}>
          <svg viewBox="0 0 20 20" className="size-7"><path d={P.gear} fill="#777" fillRule="evenodd" stroke="#777" /><circle cx="10" cy="10" r="3.500" fill="#1b6cb8" stroke="#ddd" strokeWidth="1" /></svg>
        </AppSlot>
        <AppSlot c={slot}>
          <svg viewBox="0 0 20 28" className="h-7 w-5">
            <rect width="20" height="28" rx="9" fill="#1479d2" />
            <path d="M5 9l10 9.500-5 4.500V5l5 4.500L5 19" fill="none" stroke="#fff" strokeWidth="1.600" />
          </svg>
        </AppSlot>
        <AppSlot c={slot}>
          <svg viewBox="0 0 28 28" className="size-7">
            <path d="M8 5 20 1l2 4-11 5Z" fill="#999" /><path d="M2 8h12v17l-9 2Z" fill="#888" />
            <circle cx="8" cy="11" r="6" fill="#ddd" stroke="#666" strokeWidth="2" /><rect x="14" y="12" width="13" height="12" fill="#5aa9df" stroke="#777" />
            <path d="M16 15h9v3h-9Z" fill="#d6453d" />
          </svg>
        </AppSlot>
        <AppSlot c={slot} dot={dot}>
          <Cell c="size-7 rounded-[12px] bg-[#1a58e0] text-[9px] font-bold text-white">zoom</Cell>
        </AppSlot>
      </div>
      <Ic c="ml-[64px] size-[14px]" d={P.up} sw={2.400} />
      <Ic c="ml-[22px] size-[20px] text-[#1d55c8]" d="M10 1.500A2.500 2.500 0 0 1 12.500 4v6a2.500 2.500 0 0 1-5 0V4A2.500 2.500 0 0 1 10 1.500ZM4.500 10a5.500 5.500 0 0 0 11 0M10 15.500V19" sw={1.500} />
      <span className="ml-[17px]"><WifiIcon /></span>
      <Ic c="ml-2 size-5" d={P.sound} />
      <span className="ml-2"><BatteryIcon /></span>
      <div className="ml-[20px] flex w-[72px] flex-col items-end text-[14px] leading-[19px]">
        <Fit w={33}>20:16</Fit>
        <Fit w={72}>14/10/2023</Fit>
      </div>
      <Ic c="ml-[9px] size-5" d={P.bell} />
    </div>
  );
}

/* ---------- Player overlays ---------- */

function TitleOverlay() {
  return (
    <div className="absolute inset-x-0 top-0 flex h-10 items-center bg-[#1d1d1d]/70 text-white">
      <Cell c="w-[61px]"><Ic c="size-[21px]" d={P.home} sw={1.400} /></Cell>
      <Cell c="w-[47px]"><MediaBadge c="size-[22px]" /></Cell>
      <Fit w={88} c="ml-[2px] text-[14.500px] font-medium">Media Player</Fit>
      <Cell c="ml-auto w-[57px]"><i className="h-px w-3 bg-white" /></Cell>
      <Cell c="w-[57px]">
        <Ic c="size-3" d="M4 5h9a2 2 0 0 1 2 2v10a2 2 0 0 1-2 2H4a2 2 0 0 1-2-2V7a2 2 0 0 1 2-2ZM6 1.500h9A3.500 3.500 0 0 1 18.500 5v10" sw={1.900} />
      </Cell>
      <Cell c="w-[57px]"><Ic c="size-[18px]" d={P.x} sw={1.400} /></Cell>
    </div>
  );
}

function Skip({ n, flip }: { n: string; flip?: boolean }) {
  return (
    <div className="flex flex-col items-center">
      <svg viewBox="0 0 20 8" className={clsx("h-2 w-5 overflow-visible", flip && "-scale-x-100")} fill="none" stroke="currentColor" strokeWidth="1.400" strokeLinecap="round" strokeLinejoin="round">
        <path d="M1.500 0v6h6M1.500 6C5-1 15-1 18.500 6" />
      </svg>
      <span className="mt-[-1px] text-[11.500px] font-semibold leading-[13px]">{n}</span>
    </div>
  );
}

function PauseButton() {
  return (
    <svg viewBox="0 0 62 62" className="size-[62px]">
      <defs>
        <linearGradient id="ring" x1=".15" y1=".15" x2=".9" y2=".8">
          <stop offset=".3" stopColor="#f3762a" />
          <stop offset=".55" stopColor="#d8447f" />
          <stop offset=".75" stopColor="#b0308e" />
          <stop offset="1" stopColor="#7c2d8c" />
        </linearGradient>
      </defs>
      <circle cx="31" cy="31" r="28.700" fill="none" stroke="url(#ring)" strokeWidth="4.600" />
      <rect x="18.500" y="18.500" width="9.500" height="25.500" rx="3" fill="#fff" />
      <rect x="34" y="18.500" width="9.500" height="25.500" rx="3" fill="#fff" />
    </svg>
  );
}

function Controls() {
  return (
    <div className="absolute inset-x-0 bottom-0 h-[146px] bg-[#1d1d1d]/70 text-white">
      <div className="flex h-[41px] items-center">
        <Fit w={41} c="ml-5 text-[14.500px]">1:01:51</Fit>
        <div className="ml-[27px] flex h-[41px] w-[1744px] shrink-0 items-center rounded-[9px] border-[3px] border-white px-[6px] shadow-[inset_0_0_0_1px_#333]">
          <div className="h-[5px] w-[1641px] rounded-l-full bg-[#ff8230]" />
          <Cell c="-my-2 -ml-px size-[26px] rounded-full border border-[#555] bg-[#454545]"><i className="size-[13px] rounded-full bg-[#ff8230]" /></Cell>
          <div className="h-[5px] flex-1 rounded-r-full bg-[#b5b5b5]" />
        </div>
        <Fit w={48} c="ml-[20px] text-[14.500px]">0:02:20</Fit>
      </div>
      <div className="mt-[21px] flex h-[63px] items-center">
        <Fit w={505} c="ml-[19px] text-[24px] font-semibold">Analog and Digital Communication_Chap 8.1</Fit>
        <Cell c="ml-[233.500px] w-[55px]"><Ic c="size-5" d="M1 4.500h2C8 4.500 11 15 16 15h3M1 15h2c2 0 4-2 5.500-4M12 7c1.500-1.500 3-2.500 4-2.500h3M16.500 1.500l3 3-3 3M16.500 12l3 3-3 3M1 0l18 20" sw={1.300} /></Cell>
        <Cell c="w-[55px]"><Ic c="size-[19px]" d="M1 1v18" sw={1.400}><path d="M18 2v16L5.500 10Z" fill="currentColor" /></Ic></Cell>
        <Cell c="w-[55px]"><Skip n="10" /></Cell>
        <Cell c="w-[73px] pr-px"><PauseButton /></Cell>
        <Cell c="w-[55px]"><Skip n="30" flip /></Cell>
        <Cell c="w-[55px] text-[#a0a0a0]"><Ic c="size-[19px]" d="M19 1v18" sw={1.400}><path d="M2 2v16L14.500 10Z" fill="currentColor" /></Ic></Cell>
        <Cell c="w-[55px]"><Ic c="size-5" d="M4 15A7 7 0 0 1 6 4h9M12 1l3 3-3 3M16 5.500A7 7 0 0 1 14 16H6M9 13l-3 3 3 3M1 1l18 18" sw={1.400} /></Cell>
        <Cell c="ml-auto w-[55px]"><Ic c="size-5" d="M4 12h2M8 12h8M4 15h7M13 15h3" sw={1.300}><rect x="0" y="2" width="20" height="15.500" rx="2.500" /></Ic></Cell>
        <Cell c="w-[55px]"><Ic c="size-[21px]" d={P.sound} sw={1.300} /></Cell>
        <Cell c="w-[55px]"><Ic c="size-[20px]" d={P.expand} sw={1.400} /></Cell>
        <Cell c="w-[55px]"><Ic c="size-[18px]" d="M1 7V3.500A2.500 2.500 0 0 1 3.500 1h13A2.500 2.500 0 0 1 19 3.500v13a2.500 2.500 0 0 1-2.500 2.500H13M11 1v9h8M2 11.500h7v7M9 11.500l-8 8" sw={1.500} /></Cell>
        <Cell c="w-[55px] gap-[3px]"><i className="size-[3.500px] rounded-full bg-white" /><i className="size-[3.500px] rounded-full bg-white" /><i className="size-[3.500px] rounded-full bg-white" /></Cell>
      </div>
    </div>
  );
}

/* ---------- Host taskbar ---------- */

function Taskbar() {
  const slot = "h-[50px] w-[55px]";
  const dot = "bottom-0 h-1 w-2 bg-[#9a9a9a]";
  return (
    <div className="flex h-[60px] items-center border-t border-[#3d3d3d] bg-[#1c1c1c] text-white">
      <svg viewBox="0 0 30 26" className="ml-[25px] h-[26px] w-[30px]">
        <circle cx="21.500" cy="7.500" r="7" fill="#f59a1c" />
        <path d="M7 25.500a6.500 6.500 0 0 1-1-13 8.500 8.500 0 0 1 16-1.500 7.300 7.300 0 0 1 2 14.500Z" fill="#b9cdf5" />
        <path d="M7 25.500a6.500 6.500 0 0 1 0-13c4 0 6 3 7 5 2-4 8-5 10 0 2 3 2 8 0 8Z" fill="#dce7fc" />
      </svg>
      <div className="-mt-[3px] ml-[9px] flex w-[466px] flex-col text-[14.500px] leading-5">
        <Fit w={32}>28°C</Fit>
        <Fit w={94} c="text-[#cfcfcf]">Mostly cloudy</Fit>
      </div>
      <StartLogo c="size-[29px]" />
      <div className="ml-[17px] flex h-10 w-[274px] shrink-0 items-center rounded-full border border-[#4a4a4a] bg-[#383838] pl-[14px]">
        <Ic c="size-[18px]" d={P.search} sw={1.800} />
        <Fit w={52} c="ml-[13px] text-[16px] text-[#dcdcdc]">Search</Fit>
        <svg viewBox="0 0 62 30" className="ml-auto mr-[5px] mt-1 h-[30px] w-[62px]">
          <ellipse cx="31" cy="18" rx="31" ry="12" fill="#45b8e2" />
          <ellipse cx="31" cy="15" rx="26" ry="9" fill="#7fd8ee" />
          <path d="M10 10Q15 0 26 3q8-1 8 5-6-4-12-1-6-2-12 3Z" fill="#3b9a55" />
          <path d="M14 20q12 8 28 2 10-4 9-13 8 8 0 14-10 7-24 5-10-2-13-8Z" fill="#c4703a" />
          <path d="M26 20l14-3 6 3-12 5Z" fill="#dd935a" />
        </svg>
      </div>
      <div className="ml-[3px] flex">
        <AppSlot c={slot}><TaskViewIcon /></AppSlot>
        <AppSlot c={slot} dot={dot}><FolderIcon c="h-7 w-[30px]" /></AppSlot>
        <AppSlot c={slot} dot={dot}>
          <ChromeIcon c="size-[30px]" />
          <i className="absolute right-[6px] top-0 flex size-5 items-center justify-center rounded-full bg-[#b9c6dc]"><i className="h-3 w-[6px] rounded-full bg-[#a58b62]" /></i>
        </AppSlot>
        <AppSlot c={slot} dot={dot}>
          <EdgeIcon c="size-[30px]"><circle cx="7" cy="23" r="7.500" fill="#8c6a3c" /><circle cx="7.500" cy="22" r="3.500" fill="#e3b070" /></EdgeIcon>
        </AppSlot>
        <AppSlot c={slot}>
          <svg viewBox="0 0 30 30" className="size-[30px]">
            <path d="M8 6V1.500h14V6" fill="none" stroke="#2aa5e2" strokeWidth="1.800" />
            <path d="M.5 5.500h29V26a3.500 3.500 0 0 1-3.500 3.500H4A3.500 3.500 0 0 1 .5 26Z" fill="#f1f1f1" />
            <path d="M9.500 12h5v5h-5Z" fill="#f25022" /><path d="M15.500 12h5v5h-5Z" fill="#7fba00" />
            <path d="M9.500 18h5v5h-5Z" fill="#00a4ef" /><path d="M15.500 18h5v5h-5Z" fill="#ffb900" />
          </svg>
        </AppSlot>
        <AppSlot c={slot}>
          <Cell c="size-[30px] rounded-full border-2 border-white bg-[#0f94d8] text-[24px] font-bold leading-none">?</Cell>
          <i className="absolute right-[5px] top-0 size-5 rounded-full bg-[#ffc20e]" />
        </AppSlot>
        <AppSlot c={slot}>
          <svg viewBox="0 0 28 30" className="h-[30px] w-7">
            <path d="M1 0 14 6 27 0V22.500L14 30 1 22.500Z" fill="#c8262c" />
            <path d="M7 9.500 14 13l7-3.500V18.500L14 22.500 7 18.500Z" fill="#1c1c1c" />
          </svg>
        </AppSlot>
        <AppSlot c={slot} dot={dot}>
          <svg viewBox="0 0 30 30" className="size-[30px]">
            <path d="M1 29 3 21.500A13.500 13.500 0 1 1 8.500 27Z" fill="#1c1c1c" stroke="#25d366" strokeWidth="2.600" />
            <path d="M10 8c2-1 2.500 0 3.200 2.500.3 1.200-1.500 2-1 2.800 1 2 2.500 3.500 4.600 4.300.8.3 1.600-2 2.600-1.500 3 1.200 3.200 1.600 2.600 3-1 2.500-4 2.900-6.500 1.900-4-1.500-6.500-4.500-7.500-8C7.500 11 8.500 9 10 8Z" fill="#25d366" />
          </svg>
          <Cell c="absolute right-[4px] top-0 h-5 w-[23px] rounded-full bg-[#f58c90] text-[13px] text-black">14</Cell>
        </AppSlot>
        <AppSlot c={slot} dot={dot}><WordIcon c="h-[27px] w-[29px]" /></AppSlot>
        <AppSlot c={clsx(slot, "before:absolute before:inset-x-[3px] before:inset-y-0 before:rounded-md before:border before:border-[#3a3a3a] before:bg-[#2a2a2a]")} dot="bottom-0 h-1 w-5 bg-[#f58c90]">
          <MediaBadge c="relative size-[31px]" />
        </AppSlot>
      </div>
      <Ic c="ml-[157px] size-4" d={P.up} sw={2} />
      <div className="-mt-px ml-[25px] flex w-[30px] flex-col text-[14.500px] leading-5">
        <Fit w={29}>ENG</Fit>
        <Fit w={30}>INTL</Fit>
      </div>
      <span className="ml-[21px]"><WifiIcon /></span>
      <Ic c="ml-[9px] size-5" d={P.sound} sw={1.200} />
      <span className="ml-[10px]"><BatteryIcon leaf /></span>
      <div className="-mt-[3px] ml-[21px] flex w-[64px] shrink-0 flex-col items-end text-[14.500px] leading-5">
        <Fit w={64}>11:02 AM</Fit>
        <Fit w={61}>8/6/2024</Fit>
      </div>
      <svg viewBox="0 0 20 20" className="ml-[10px] size-5 overflow-visible">
        <path d="M1 15.500V14l1.500-1.500V7a6.500 6.500 0 0 1 13 0v5.500L17 14v1.500ZM6 17h6a3 3 0 0 1-6 0Z" fill="#fff" />
        <path d="M6.500 7h4.500l-4.500 5.500h4.500" fill="none" stroke="#1c1c1c" strokeWidth="1.500" />
        <path d="M12 0h6v6.500h-6Z" fill="#1c1c1c" /><path d="M12.500 1h4l-4 4.800h4" fill="none" stroke="#fff" strokeWidth="1.300" />
      </svg>
      <div className="relative ml-[20px] size-[30px]">
        <svg viewBox="0 0 30 30" className="size-[30px]">
          <defs>
            <linearGradient id="cpa" x1="0" y1="0" x2="0" y2="1">
              <stop offset="0" stopColor="#2a9cf0" />
              <stop offset=".5" stopColor="#38b8b0" />
              <stop offset="1" stopColor="#d8d44a" />
            </linearGradient>
            <linearGradient id="cpb" x1="0" y1="0" x2="0" y2="1">
              <stop offset="0" stopColor="#b568ec" />
              <stop offset="1" stopColor="#f0618e" />
            </linearGradient>
          </defs>
          <path d="M15 0h4q3 0 4 4l1 4h-5Z" fill="#2455c9" />
          <path d="M6 4Q7 0 11 0h7q-2 1-3 4l-4 13q-1 3-4 3H4q-5 0-4-5Z" fill="url(#cpa)" />
          <path d="M20 7h5q4 0 3.500 5L27 19q-1 5-5 5h-8q2-1 3-4Z" fill="url(#cpb)" />
        </svg>
        <Cell c="absolute -bottom-[1px] left-[7px] h-[9px] w-[23px] rounded-[2px] bg-[#ffc61a] text-[9px] font-bold leading-none text-black">PRE</Cell>
      </div>
    </div>
  );
}

export default function App() {
  return (
    <div className={clsx("flex h-[1080px] w-[1920px] flex-col overflow-hidden bg-black", UI)}>
      <div className="relative h-[1020px] shrink-0 overflow-hidden bg-black">
        <div className="ml-[53px] h-[1020px] w-[1813px] overflow-hidden bg-[#f7f7f7]">
          <Browser />
          <InnerTaskbar />
        </div>
        <TitleOverlay />
        <Controls />
      </div>
      <Taskbar />
    </div>
  );
}
